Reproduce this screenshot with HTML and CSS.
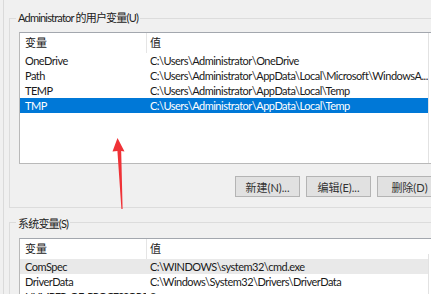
FILE: index.html
```html
<!DOCTYPE html>
<html lang="zh-CN">
<head>
    <meta charset="UTF-8">
    <title>环境变量</title>
    <link rel="stylesheet" href="styles.css">
</head>
<body>
    <div class="window">
        <!-- 用户变量 -->
        <div class="group group-user">
            <span class="legend">Administrator 的用户变量(U)</span>
            <div class="list list-user">
                <div class="table">
                    <div class="row head"><span class="c-name">变量</span><span class="c-value">值</span></div>
                    <div class="row"><span class="c-name">OneDrive</span><span class="c-value">C:\Users\Administrator\OneDrive</span></div>
                    <div class="row"><span class="c-name">Path</span><span class="c-value">C:\Users\Administrator\AppData\Local\Microsoft\WindowsA...</span></div>
                    <div class="row"><span class="c-name">TEMP</span><span class="c-value">C:\Users\Administrator\AppData\Local\Temp</span></div>
                    <div class="row selected"><span class="c-name">TMP</span><span class="c-value">C:\Users\Administrator\AppData\Local\Temp</span></div>
                </div>
                <div class="scroll"></div>
            </div>
            <div class="buttons">
                <button>新建(N)...</button>
                <button>编辑(E)...</button>
                <button>删除(D)</button>
            </div>
        </div>

        <!-- 系统变量 -->
        <div class="group group-system">
            <span class="legend">系统变量(S)</span>
            <div class="list list-system">
                <div class="table">
                    <div class="row head"><span class="c-name">变量</span><span class="c-value">值</span></div>
                    <div class="row hover"><span class="c-name">ComSpec</span><span class="c-value">C:\WINDOWS\system32\cmd.exe</span></div>
                    <div class="row"><span class="c-name">DriverData</span><span class="c-value">C:\Windows\System32\Drivers\DriverData</span></div>
                    <div class="row"><span class="c-name tight">NUMBER_OF_PROCESSORS</span><span class="c-value">8</span></div>
                </div>
                <div class="scroll"></div>
            </div>
        </div>

        <!-- red arrow annotation -->
        <svg class="arrow" width="431" height="294" viewBox="0 0 431 294">
            <polygon points="117.5,138 124.5,151.5 121.2,151 122.6,209 121.4,209 117.4,151 112.5,151.5" fill="#ef3237"/>
        </svg>
    </div>
</body>
</html>
```

FILE: styles.css
```css
html, body {
    margin: 0;
    padding: 0;
    overflow: hidden;
}

body {
    width: 431px;
    height: 294px;
    background-color: #f0f0f0;
    font-family: Lato, "Noto Sans CJK SC", sans-serif;
    font-size: 11px;
    color: #1a1a1a;
}

.window {
    position: relative;
    width: 470px;
    height: 294px;
    margin-left: 3px;
    padding-top: 18px;
    border-left: 1px solid #dadada;
    box-sizing: border-box;
    overflow: hidden;
}

/* group boxes */
.group {
    margin-left: 5px;
    border: 1px solid #dcdcdc;
    padding: 0 0 10px 9px;
}

.group-system {
    margin-top: 14px;
    border-bottom: none;
}

.legend {
    display: block;
    width: fit-content;
    height: 16px;
    line-height: 16px;
    margin: -9px 0 0 -3px;
    padding: 0 2px;
    background-color: #f0f0f0;
    color: #222;
    letter-spacing: -0.8px;
}

.group-system .legend {
    margin-top: -7px;
}

/* list views */
.list {
    display: flex;
    margin-top: 6px;
    background: #fff;
    border: 1px solid #b9b9b9;
    border-top-color: #a3a7ae;
}

.list-user {
    height: 130px;
}

.list-system {
    height: 80px;
    border-bottom: none;
}

.table {
    width: 408px;
    overflow: hidden;
}

.scroll {
    flex: 1;
    border-left: 1px solid #e2e2e2;
}

.list-system .scroll {
    margin-top: 15px;
}

.row {
    display: flex;
    height: 15px;
    line-height: 15px;
    white-space: nowrap;
    letter-spacing: -0.5px;
}

.row.head {
    height: 20px;
    line-height: 19px;
    letter-spacing: 0;
}

.c-name {
    flex: none;
    width: 121px;
    padding-left: 5px;
    overflow: hidden;
}

.c-name.tight {
    letter-spacing: -1px;
}

.c-value {
    padding-left: 4px;
}

.head .c-name {
    border-right: 1px solid #e5e5e5;
}

.head .c-value {
    padding-left: 3px;
}

.row.selected {
    background-color: #0078d7;
    color: #fff;
}

.row.hover {
    background-color: #e9e9e9;
}

/* buttons */
.buttons {
    display: flex;
    gap: 6px;
    margin: 12px 0 0 216px;
}

button {
    flex: none;
    width: 65px;
    height: 21px;
    padding: 0;
    font-family: inherit;
    font-size: 11px;
    color: #333;
    background-color: #e1e1e1;
    border: 1px solid #b4b4b4;
    border-radius: 0;
}

.arrow {
    position: absolute;
    left: -4px;
    top: 0;
    pointer-events: none;
}
```
